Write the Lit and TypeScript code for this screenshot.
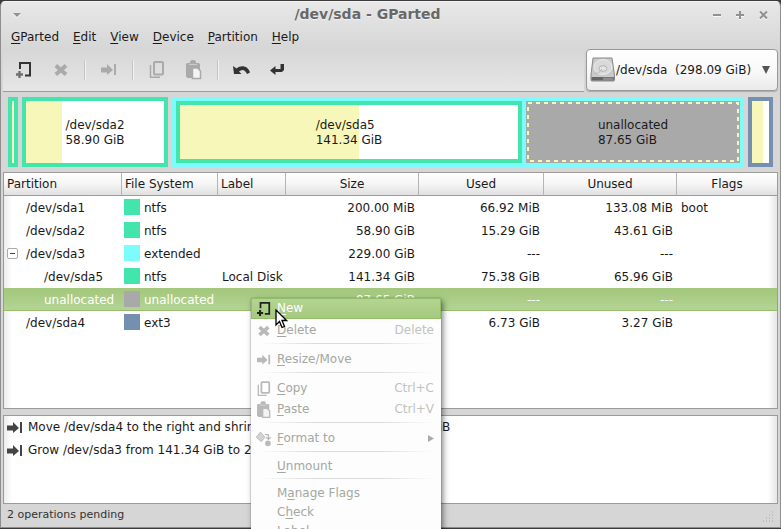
import { LitElement, html, css, svg, nothing } from "lit";
import { customElement } from "lit/decorators.js";
import { styleMap } from "lit/directives/style-map.js";
import { classMap } from "lit/directives/class-map.js";

type Fs = "ntfs" | "extended" | "ext3" | "unallocated";

interface Row {
  name: string;
  fs: Fs;
  label?: string;
  size: string;
  used: string;
  unused: string;
  flags?: string;
  child?: boolean;
  open?: boolean;
  selected?: boolean;
}

interface MenuEntry {
  text: string;
  key: number;
  icon?: string;
  accel?: string;
  sub?: boolean;
  active?: boolean;
}

const rows: Row[] = [
  { name: "/dev/sda1", fs: "ntfs", size: "200.00 MiB", used: "66.92 MiB", unused: "133.08 MiB", flags: "boot" },
  { name: "/dev/sda2", fs: "ntfs", size: "58.90 GiB", used: "15.29 GiB", unused: "43.61 GiB" },
  { name: "/dev/sda3", fs: "extended", size: "229.00 GiB", used: "---", unused: "---", open: true },
  { name: "/dev/sda5", fs: "ntfs", label: "Local Disk", size: "141.34 GiB", used: "75.38 GiB", unused: "65.96 GiB", child: true },
  { name: "unallocated", fs: "unallocated", size: "87.65 GiB", used: "---", unused: "---", child: true, selected: true },
  { name: "/dev/sda4", fs: "ext3", size: "10.00 GiB", used: "6.73 GiB", unused: "3.27 GiB" },
];

const menuGroups: MenuEntry[][] = [
  [
    { text: "New", key: 0, icon: "new", active: true },
    { text: "Delete", key: 0, icon: "delete", accel: "Delete" },
  ],
  [{ text: "Resize/Move", key: 0, icon: "resize" }],
  [
    { text: "Copy", key: 0, icon: "copy", accel: "Ctrl+C" },
    { text: "Paste", key: 0, icon: "paste", accel: "Ctrl+V" },
  ],
  [{ text: "Format to", key: 0, icon: "format", sub: true }],
  [{ text: "Unmount", key: 0 }],
  [
    { text: "Manage Flags", key: 1 },
    { text: "Check", key: 1 },
    { text: "Label", key: 0 },
  ],
];

const shapes: Record<string, unknown> = {
  new: svg`<path d="M4 7V1H14V13.500H9" fill="none" stroke="currentColor" stroke-width="2"/>
    <path d="M3.500 9V16M0 12.500H7" fill="none" stroke="var(--plus, currentColor)" stroke-width="2.400"/>`,
  delete: svg`<path d="M2.800 3.600L13 12.500M13 3.600L2.800 12.500" fill="none" stroke="currentColor" stroke-width="4"/>`,
  resize: svg`<path d="M0 5.500H6V2L12 8L6 13V10.500H0Z" fill="currentColor"/><path d="M14 2V13" stroke="currentColor" stroke-width="2"/>`,
  copy: svg`<rect x="5" y="0" width="9" height="12.500" rx="1" fill="none" stroke="currentColor" stroke-width="2"/>
    <path d="M1.500 3V15.200H11" fill="none" stroke="currentColor" stroke-width="1.500"/>`,
  paste: svg`<path d="M1 1H4V-0.500L5.500 -2H8.500L10 -0.500V1H13L14 2V7H6V16H1.500L0 14.500V2Z" fill="currentColor"/>
    <path d="M3 2.500H11" stroke="#eee" stroke-width="1" opacity="0.5"/>
    <path d="M6.500 6H11.500L14.500 9V16.500H6.500Z" fill="#f4f4f4" stroke="currentColor" stroke-width="1.500"/>`,
  format: svg`<path d="M4 0L9 6L5 11L-1 6Z" fill="#d2d2d2" stroke="currentColor"/>
    <path d="M9 3H13V8M10.500 6L13 8.500L15.500 6" fill="none" stroke="currentColor" stroke-width="1.400"/>
    <circle cx="12.500" cy="13" r="3.200" fill="currentColor"/>`,
  undo: svg`<path d="M-1 4L0 12H7.500L5 9.500C8 7 11 7.500 13 12L16 10.500C14 3.500 7 2.500 2.500 6.500Z" fill="currentColor"/>`,
  apply: svg`<path d="M-1 8.500L4.500 4V7H9.500V2H13V8L11 10H4.500V13Z" fill="currentColor"/>`,
};

const icon = (name: string) =>
  html`<svg class="icon" width="16" height="16" viewBox="0 0 16 16" aria-hidden="true">${shapes[name]}</svg>`;

const keyed = (text: string, at = 0) => html`${text.slice(0, at)}<u>${text[at]}</u>${text.slice(at + 1)}`;

/* Column tracks proportional to partition lengths. */
const tracks = (...sizes: number[]) =>
  styleMap({ gridTemplateColumns: sizes.map((n) => `minmax(0, ${n}fr)`).join(" ") });

@customElement("app-root")
export class AppRoot extends LitElement {
  static styles = css`
    :host {
      display: block;
      min-height: 100vh;
      background: #3c3a3c;
      font: 12px/15px "DejaVu Sans", sans-serif;
      color: #1a1a1a;
    }
    * { box-sizing: border-box; }
    button { font: inherit; color: inherit; background: none; border: 0; padding: 0; text-align: left; }
    u { text-decoration: underline; text-underline-offset: 2px; }
    .screen { position: relative; height: 100vh; overflow: hidden; padding: 1px 0; }
    .window {
      height: 100%;
      display: flex;
      flex-direction: column;
      background: linear-gradient(#e8e8e8, #d6d6d6 48px);
      border: 1px solid #8e8e8e;
      border-top-color: #f4f4f4;
      border-radius: 5px 5px 0 0;
      padding: 0 2px;
    }
    .titlebar { display: grid; grid-template-columns: 16px 1fr 64px; align-items: center; height: 26px; padding: 0 7px 0 9px; flex: none; }
    .titlebar h1 { margin: 0; padding-bottom: 2px; font-size: 14px; line-height: 17px; text-align: center; color: #686868; text-shadow: 0 1px #f2f2f2; }
    .controls { display: flex; justify-content: flex-end; gap: 7px; }
    .wbtn { display: flex; width: 16px; height: 16px; color: #919191; filter: drop-shadow(0 1px 0 #fafafa); }
    .menubar { display: flex; align-items: flex-start; gap: 14px; padding: 2px 8px 0; height: 20px; flex: none; }
    .toolbar {
      display: flex;
      align-items: center;
      height: 44px;
      flex: none;
      padding: 0 0 0 9px;
      border-bottom: 1px solid #9b9b9b;
      background: linear-gradient(#d6d6d6, #e6e6e6);
      margin-right: 194px;
    }
    .toolrow { display: flex; position: relative; flex: none; flex-direction: column; }
    .icon { overflow: visible; flex: none; }
    .tool { display: flex; width: 24px; height: 24px; padding: 4px; color: #333; }
    .tool + .tool { margin-left: 13px; }
    .new { --plus: #6e7174; }
    .tool:disabled { color: #aaa; }
    .vsep { width: 2px; height: 20px; margin: 0 11px; background: linear-gradient(90deg, #c4c4c4 50%, #f2f2f2 50%); }
    .device {
      position: absolute;
      right: 0;
      top: 1px;
      width: 192px;
      height: 42px;
      border: 1px solid #999;
      border-radius: 4px;
      background: linear-gradient(#fff, #f8f8f8 55%, #e9e9e9);
      box-shadow: 0 1px 1px #aaa;
      display: flex;
      align-items: center;
      padding: 0 7px 0 3px;
    }
    .device select {
      flex: 1;
      min-width: 0;
      appearance: none;
      border: 0;
      padding: 0;
      background: none;
      font: inherit;
      color: inherit;
    }
    .drive, .arrow { flex: none; }
    .map { display: grid; gap: 4px; height: 70px; margin: 5px; flex: none; }
    .part { min-width: 0; position: relative; border: 4px solid; display: flex; align-items: center; justify-content: center; background: #fff; }
    .part.ntfs { border-color: #42e5ac; }
    .part.ext3 { border-color: #7590ae; }
    .part.extended { border-color: #7dfcfe; background: #7dfcfe; display: grid; gap: 4px; align-items: stretch; justify-content: stretch; }
    .part.unallocated { border: 0; background: #a9a9a9; }
    .fill { position: absolute; left: 0; top: 0; bottom: 0; background: #f8f7ba; }
    .dash { position: absolute; inset: 1px; width: calc(100% - 2px); height: calc(100% - 2px); }
    .dash rect { width: calc(100% - 2px); height: calc(100% - 2px); }
    .caption { position: relative; white-space: pre; padding-top: 2px; }
    .tree, .ops { border: 1px solid #9b9b9b; background: linear-gradient(90deg, #ececec, #fff 8px, #fff calc(100% - 9px), #e8e8e8 calc(100% - 1px)); }
    .tree { flex: 1; min-height: 0; overflow: hidden; }
    table { width: 100%; table-layout: fixed; border-collapse: separate; border-spacing: 0; }
    th {
      height: 23px;
      padding: 0 3px;
      font-weight: normal;
      text-align: left;
      background: linear-gradient(#fff, #f5f5f5 50%, #e0e0e0);
      border-right: 1px solid #b5b5b5;
      border-bottom: 1px solid #9b9b9b;
    }
    th:last-child { border-right: 0; }
    .mid { text-align: center; }
    td { height: 23px; padding: 2px 4px 0; white-space: nowrap; }
    .num { text-align: right; }
    .name { padding-left: 22px; position: relative; }
    .child { padding-left: 40px; }
    .fs { display: flex; gap: 4px; padding: 3px 0 0 2px; }
    .fsname { padding-top: 2px; }
    .swatch { width: 16px; height: 16px; }
    .swatch.ntfs { background: #42e5ac; }
    .swatch.extended { background: #7dfcfe; }
    .swatch.ext3 { background: #7590ae; }
    .swatch.unallocated { background: #a9a9a9; }
    .picked { color: #fff; background: linear-gradient(#a3c77c, #b4d495); box-shadow: inset 0 -1px #96bd6c; }
    .twist {
      position: absolute;
      left: 3px;
      top: 6px;
      width: 11px;
      height: 11px;
      border: 1px solid #aaa;
      border-radius: 2px;
      background: linear-gradient(#444, #444) center / 5px 1px no-repeat, #fff;
    }
    .ops { flex: none; height: 89px; margin: 6px 0 0; padding: 0 3px; list-style: none; }
    .ops li { display: flex; align-items: center; gap: 5px; height: 23px; white-space: pre; }
    .ops .icon { color: #444; }
    .status { display: flex; flex: none; height: 23px; padding: 0 4px 2px; align-items: center; justify-content: space-between; font-size: 11px; color: #333; }
    .grip { align-self: flex-end; margin-bottom: 2px; }
    .popup {
      position: absolute;
      left: 251px;
      top: 298px;
      width: 190px;
      background: #fdfdfd;
      box-shadow: 2px 3px 6px rgba(0, 0, 0, 0.5), 0 0 1px #777;
      color: #a4a8a0;
    }
    .item { display: flex; align-items: center; width: 100%; height: 19px; padding: 2px 7px 0 26px; }
    .item.pic { height: 21px; padding-left: 6px; gap: 6px; }
    .item .icon { width: 14px; height: 14px; color: #b9b9b9; }
    .grow { flex: 1; }
    .accel { color: #c0c4bd; }
    .item.active { color: #fff; background: linear-gradient(#b4d592, #a5c97f); border: 1px solid #94bd6a; padding: 0 6px 0 5px; }
    .item.active .icon { color: #222; }
    .rule { height: 1px; margin: 3px 8px 4px; border: 0; background: linear-gradient(90deg, #fdfdfd, #dcdcdc 30%, #dcdcdc 70%, #fdfdfd); }
    .pointer { position: absolute; left: 275px; top: 309px; }
  `;

  private tool(name: string, label: string, disabled = false) {
    return html`<button class=${classMap({ tool: true, new: name === "new" })} aria-label=${label} ?disabled=${disabled}>${icon(name)}</button>`;
  }

  private part(fs: Fs, used: number, name?: string, size?: string) {
    return html`<div class="part ${fs}">
      <div class="fill" style=${styleMap({ width: `${used}%` })}></div>
      ${fs === "unallocated"
        ? html`<svg class="dash" aria-hidden="true"><rect x="1" y="1" fill="none" stroke="#f8f7ba" stroke-width="2" stroke-dasharray="4 4" /></svg>`
        : nothing}
      ${name ? html`<div class="caption">${name}<br />${size}</div>` : nothing}
    </div>`;
  }

  private row(r: Row) {
    return html`<tr class=${classMap({ picked: !!r.selected })}>
      <td class=${classMap({ name: true, child: !!r.child })}>
        ${r.open ? html`<button class="twist" aria-label="Collapse"></button>` : nothing}${r.name}
      </td>
      <td class="fs"><span class="swatch ${r.fs}"></span><span class="fsname">${r.fs}</span></td>
      <td>${r.label}</td>
      <td class="num">${r.size}</td>
      <td class="num">${r.used}</td>
      <td class="num">${r.unused}</td>
      <td>${r.flags}</td>
    </tr>`;
  }

  private item(m: MenuEntry) {
    return html`<button role="menuitem" class=${classMap({ item: true, pic: !!m.icon, active: !!m.active })}>
      ${m.icon ? icon(m.icon) : nothing}<span class="grow">${keyed(m.text, m.key)}</span>
      ${m.accel ? html`<span class="accel">${m.accel}</span>` : nothing}
      ${m.sub ? html`<svg width="6" height="7" aria-hidden="true"><path d="M0 0L6 3.500L0 7Z" fill="#aaa" /></svg>` : nothing}
    </button>`;
  }

  render() {
    return html`<div class="screen">
      <main class="window">
        <header class="titlebar">
          <button class="wbtn" aria-label="Window menu"><svg width="16" height="16"><path d="M1 6H9L5 10Z" fill="currentColor" /></svg></button>
          <h1>/dev/sda - GParted</h1>
          <div class="controls">
            <button class="wbtn" aria-label="Minimize"><svg width="16" height="16"><path d="M4 8H12" stroke="currentColor" stroke-width="2" /></svg></button>
            <button class="wbtn" aria-label="Maximize"><svg width="16" height="16"><path d="M4 8H12M8 4V12" stroke="currentColor" stroke-width="2" /></svg></button>
            <button class="wbtn" aria-label="Close"><svg width="16" height="16"><path d="M5 4.500L12 11.500M12 4.500L5 11.500" stroke="currentColor" stroke-width="2" /></svg></button>
          </div>
        </header>
        <nav class="menubar">
          ${["GParted", "Edit", "View", "Device", "Partition", "Help"].map((m) => html`<button>${keyed(m)}</button>`)}
        </nav>
        <div class="toolrow">
          <div class="toolbar">
            ${this.tool("new", "New")}${this.tool("delete", "Delete", true)}<span class="vsep"></span>
            ${this.tool("resize", "Resize/Move", true)}<span class="vsep"></span>
            ${this.tool("copy", "Copy", true)}${this.tool("paste", "Paste", true)}<span class="vsep"></span>
            ${this.tool("undo", "Undo")}${this.tool("apply", "Apply")}
          </div>
          <div class="device">
            <svg class="drive" width="26" height="26" viewBox="0 0 26 26" aria-hidden="true">
              <path d="M3 1H22L24.500 18V23Q24.500 24 23.500 24H2Q1 24 1 23V18Z" fill="#c9c9c9" stroke="#888" />
              <path d="M1.500 20H24V23.500H1.500Z" fill="#666" />
              <path d="M13 20.500H23.500V23H13Z" fill="#8c8c8c" />
              <ellipse cx="13" cy="10" rx="9" ry="7.500" fill="#d9d9d9" stroke="#ececec" />
              <ellipse cx="13" cy="11.500" rx="4" ry="2.800" fill="#e4e4e4" stroke="#b4b4b4" />
              <path d="M4 16Q8 18 12 12" fill="none" stroke="#b8b8b8" />
            </svg>
            <select aria-label="Device"><option>/dev/sda&nbsp; (298.09 GiB)</option></select>
            <svg class="arrow" width="8" height="8" aria-hidden="true"><path d="M0 0H8L4 8Z" fill="#555" /></svg>
          </div>
        </div>
        <section class="map" aria-label="Disk map" style=${tracks(10, 146, 572, 25)}>
          ${this.part("ntfs", 50)} ${this.part("ntfs", 26, "/dev/sda2", "58.90 GiB")}
          <div class="part extended" style=${tracks(346, 214)}>
            ${this.part("ntfs", 53, "/dev/sda5", "141.34 GiB")} ${this.part("unallocated", 0, "unallocated", "87.65 GiB")}
          </div>
          ${this.part("ext3", 65)}
        </section>
        <section class="tree">
          <table>
            <colgroup><col width="118" /><col width="96" /><col width="68" /><col width="133" /><col width="125" /><col width="133" /><col /></colgroup>
            <thead>
              <tr>
                <th>Partition</th><th>File System</th><th>Label</th><th class="mid">Size</th><th class="mid">Used</th><th class="mid">Unused</th><th class="mid">Flags</th>
              </tr>
            </thead>
            <tbody>${rows.map((r) => this.row(r))}</tbody>
          </table>
        </section>
        <ul class="ops">
          <li>${icon("resize")}<span>Move /dev/sda4 to the right and shrink it from  10.79 GiB to 10.00 GiB</span></li>
          <li>${icon("resize")}<span>Grow /dev/sda3 from 141.34 GiB to 229.00 GiB</span></li>
        </ul>
        <footer class="status">
          <span>2 operations pending</span>
          <svg class="grip" width="12" height="12" aria-hidden="true"><path d="M10 1h1M7 4h1M10 4h1M4 7h1M7 7h1M10 7h1M1 10h1M4 10h1M7 10h1M10 10h1" stroke="#aaa" /></svg>
        </footer>
      </main>
      <div class="popup" role="menu">
        ${menuGroups.map((g, i) => html`${i ? html`<hr class="rule" />` : nothing}${g.map((m) => this.item(m))}`)}
      </div>
      <svg class="pointer" width="13" height="20" viewBox="0 0 13 20" aria-hidden="true">
        <path d="M1 1V16L4.500 12.500L7 18.500L9.500 17.500L7 11.500H11.500Z" fill="#fff" stroke="#000" stroke-width="1.300" />
      </svg>
    </div>`;
  }
}
